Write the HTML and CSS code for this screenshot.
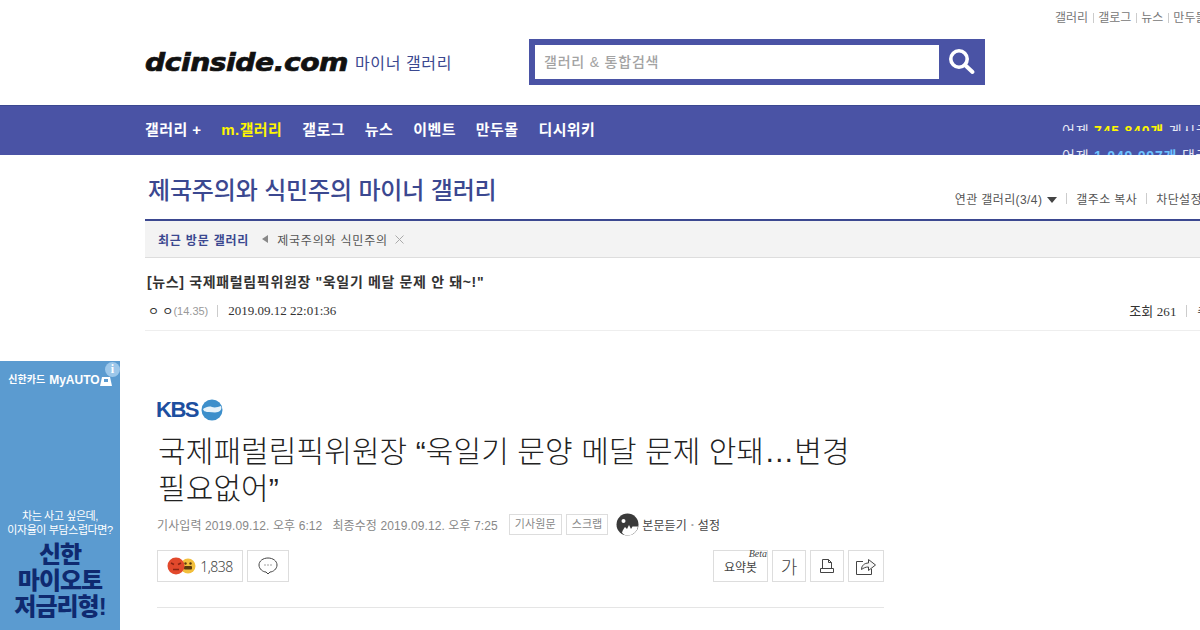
FILE: index.html
```html
<!DOCTYPE html>
<html lang="ko">
<head>
  <meta charset="UTF-8">
  <title>[뉴스] 국제패럴림픽위원장 "욱일기 메달 문제 안 돼~!" - 제국주의와 식민주의 마이너 갤러리</title>
  <link rel="stylesheet" href="styles.css">
</head>
<body>

  <!-- Top links -->
  <div class="util">
    <a href="#">갤러리</a><i></i><a href="#">갤로그</a><i></i><a href="#">뉴스</a><i></i><a href="#">만두몰</a>
  </div>

  <!-- Logo and search -->
  <header class="head">
    <div class="brand">
      <span class="logo">dcinside.com</span>
      <span class="logo-sub">마이너 갤러리</span>
    </div>
    <form class="search">
      <div class="search-input">갤러리 &amp; 통합검색</div>
      <div class="search-btn">
        <svg width="28" height="28" viewBox="0 0 28 28"><circle cx="11" cy="11" r="8.200" fill="none" stroke="#fff" stroke-width="3.600"/><path d="M17 17L24.500 24" stroke="#fff" stroke-width="4" stroke-linecap="round"/></svg>
      </div>
    </form>
  </header>

  <!-- Main navigation -->
  <nav class="gnb">
    <a href="#">갤러리 +</a>
    <a href="#" class="on">m.갤러리</a>
    <a href="#">갤로그</a>
    <a href="#">뉴스</a>
    <a href="#">이벤트</a>
    <a href="#">만두몰</a>
    <a href="#">디시위키</a>
    <div class="stats">
      <div class="stat-row">어제 <b class="yellow">745,840개</b> 게시글 등록</div>
      <div class="stat-row">어제 <b class="blue">1,049,097개</b> 댓글 등록</div>
    </div>
  </nav>

  <div class="content">
    <!-- Gallery title -->
    <div class="gall-head">
      <h2>제국주의와 식민주의 마이너 갤러리</h2>
      <div class="gall-opts">
        <span>연관 갤러리(3/4)<em class="caret"></em></span><i></i><span>갤주소 복사</span><i></i><span>차단설정</span>
      </div>
    </div>

    <div class="visited">
      <strong>최근 방문 갤러리</strong>
      <em class="arrow"></em>
      <span>제국주의와 식민주의</span>
      <svg width="9" height="9" viewBox="0 0 9 9"><path d="M.5.5l8 8M8.500.5l-8 8" stroke="#aaa" fill="none"/></svg>
    </div>

    <!-- Post head -->
    <h3 class="post-title">[뉴스] 국제패럴림픽위원장 "욱일기 메달 문제 안 돼~!"</h3>
    <div class="post-info">
      <span class="nick">ㅇ ㅇ</span><span class="ip">(14.35)</span><i></i><span class="date">2019.09.12 22:01:36</span>
      <span class="views">조회 261</span><i></i><span class="date">추천 5</span>
    </div>
  </div>

  <!-- Article -->
  <article class="article">
    <div class="press">
      <span class="press-name">KBS</span>
      <svg width="22" height="22" viewBox="0 0 22 22"><circle cx="11" cy="11" r="10.500" fill="#3d8fcb"/><path d="M2 10c3-2 6-3 9-2s6 0 9-1c1 2 0 5-3 6s-6 0-9 0-5 0-6-3z" fill="#e6f2fa"/></svg>
    </div>
    <h1 class="headline">국제패럴림픽위원장 “욱일기 문양 메달 문제 안돼…변경 필요없어”</h1>
    <div class="meta">
      <span>기사입력 2019.09.12. 오후 6:12</span>
      <span class="meta-mod">최종수정 2019.09.12. 오후 7:25</span>
      <a class="tag first" href="#">기사원문</a>
      <a class="tag" href="#">스크랩</a>
      <svg class="ear" width="23" height="23" viewBox="0 0 23 23"><circle cx="11.500" cy="11.500" r="11" fill="#3a3a3a"/><path d="M9 14l2 2 2-4 2 4 1.500-2.500H22a10.500 10.500 0 0 1-10 9c-3 0-5-1-6-3 1-3 2-4 3-5.500z" fill="#fff"/><circle cx="7.500" cy="8" r="2" fill="#fff"/></svg>
      <span class="listen">본문듣기</span>
      <span class="dot">•</span>
      <span class="listen">설정</span>
    </div>
    <div class="tools">
      <div class="reaction">
        <svg width="30" height="18" viewBox="0 0 30 18"><circle cx="21" cy="9" r="7.500" fill="#f2bf3c"/><rect x="17" y="9" width="8" height="3.500" rx="1" fill="#5a3a10"/><circle cx="18.500" cy="6.500" r="1.200" fill="#5a3a10"/><circle cx="23.500" cy="6.500" r="1.200" fill="#5a3a10"/><circle cx="9" cy="9" r="8.500" fill="#e2492c"/><path d="M4 6l3 1.500M14 6l-3 1.500M6 12.500h6" stroke="#8c2412" stroke-width="1.500" fill="none"/></svg>
        <span>1,838</span>
      </div>
      <div class="tool comment">
        <svg width="20" height="18" viewBox="0 0 20 18"><path d="M10 1c5 0 9 3 9 7s-4 7-7 7l-2 2-2-2c-3 0-7-3-7-7s4-7 9-7z" fill="none" stroke="#444"/><path d="M6.500 8h1M9.500 8h1M12.500 8h1" stroke="#444"/></svg>
      </div>
      <div class="tool summary">요약봇<em>Beta</em></div>
      <div class="tool font">가</div>
      <div class="tool print">
        <svg width="16" height="16" viewBox="0 0 16 16"><path d="M3.500 10.500V1.500h6l3 3v6M1.500 10.500h13v4h-13zM12.500 4.500h-3v-3" fill="none" stroke="#444"/></svg>
      </div>
      <div class="tool share">
        <svg width="22" height="19" viewBox="0 0 22 19"><path d="M8 4.500H1.500v13h15V12" fill="none" stroke="#444"/><path d="M6.500 12.500c0-4 3-6.500 7-6.500V2.500l7 5.500-7 5.500V10c-3 0-5 1-7 2.500z" fill="#f6f6f6" stroke="#444"/></svg>
      </div>
    </div>
    <hr class="rule">
  </article>

  <!-- Side banner -->
  <aside class="ad">
    <div class="ad-info">i</div>
    <div class="ad-brand">
      <span class="ad-card">신한카드</span>
      <span>MyAUTO</span>
      <svg width="12" height="12" viewBox="0 0 12 12"><path d="M0 12l2-9h8l2 9z" fill="#fff"/><rect x="4" y="5" width="4" height="3" fill="#5b9bd0"/></svg>
    </div>
    <p class="ad-copy">차는 사고 싶은데,<br>이자율이 부담스럽다면?</p>
    <p class="ad-big">신한<br>마이오토<br>저금리형!</p>
  </aside>

</body>
</html>
```

FILE: styles.css
```css
/* Basic styling */
html, body {
  height: 630px;
  overflow: hidden;
}

body {
  margin: 0;
  width: 1200px;
  position: relative;
  background-color: #fff;
  color: #333;
  font-family: "Liberation Sans", "Noto Sans CJK KR", sans-serif;
}

a {
  color: inherit;
  text-decoration: none;
}

/* Top links */
.util {
  height: 39px;
  box-sizing: border-box;
  padding: 10px 0 0 1055px;
  display: flex;
  align-items: flex-start;
  width: 1300px;
  font-size: 12px;
  line-height: 16px;
  color: #777;
  white-space: nowrap;
}

.util i {
  width: 1px;
  height: 10px;
  margin: 3px 4.500px 0;
  background-color: #ccc;
}

/* Logo and search */
.head {
  display: flex;
  height: 66px;
  padding-left: 145px;
}

.brand {
  width: 384px;
  height: 46px;
  display: flex;
  align-items: center;
}

.logo {
  width: 202px;
  padding-top: 1px;
  font-family: "DejaVu Sans", sans-serif;
  font-size: 24px;
  font-weight: 700;
  font-style: italic;
  letter-spacing: -0.400px;
  color: #111;
  white-space: nowrap;
  transform: scaleX(1.175);
  transform-origin: left center;
  -webkit-text-stroke: 0.7px #111;
}

.logo-sub {
  margin-left: 8px;
  font-size: 16px;
  letter-spacing: 0.600px;
  color: #3b4890;
}

.search {
  margin: 0;
  width: 456px;
  height: 46px;
  box-sizing: border-box;
  padding: 6px 0 6px 6px;
  display: flex;
  background-color: #4a53a5;
}

.search-input {
  width: 404px;
  padding-left: 9px;
  box-sizing: border-box;
  background-color: #fff;
  font-size: 14px;
  font-weight: 500;
  letter-spacing: 0.800px;
  line-height: 34px;
  color: #a3a3a3;
}

.search-btn {
  flex: 1;
  display: flex;
  align-items: center;
  justify-content: center;
}

/* Main navigation */
.gnb {
  height: 50px;
  box-sizing: border-box;
  border-top: 1px solid #3b4890;
  padding: 0 0 4px 145px;
  display: flex;
  align-items: center;
  gap: 20px;
  overflow: hidden;
  background-color: #4a53a5;
  font-size: 15px;
  font-weight: 700;
  letter-spacing: 0.400px;
  color: #fff;
  white-space: nowrap;
}

.gnb .on {
  color: #fff600;
}

.stats {
  position: absolute;
  left: 1062px;
  top: 124px;
  display: flex;
  flex-direction: column;
  gap: 18px;
  height: 31px;
  overflow: hidden;
  font-size: 14px;
  font-weight: 400;
  letter-spacing: 0.800px;
  color: #e6e8f5;
}

.stat-row {
  height: 9px;
  line-height: 14px;
  overflow: hidden;
}

.stat-row .yellow { color: #fff600; }
.stat-row .blue { color: #6fc3ff; }

/* Gallery head */
.content {
  margin-left: 145px;
  width: 1100px;
}

.gall-head {
  height: 64px;
  padding-left: 3px;
  display: flex;
  justify-content: space-between;
  box-sizing: border-box;
}

.gall-head h2 {
  margin: 21px 0 0;
  font-size: 24px;
  line-height: 30px;
  font-weight: 500;
  letter-spacing: -0.150px;
  color: #3b4890;
}

.gall-opts {
  margin-top: 35px;
  height: 16px;
  display: flex;
  align-items: center;
  font-size: 12px;
  letter-spacing: 0.400px;
  color: #555;
  padding-right: 43px;
  white-space: nowrap;
}

.gall-opts i {
  width: 1px;
  height: 11px;
  margin: 0 9px;
  background-color: #ccc;
}

.caret {
  display: inline-block;
  margin-left: 5px;
  vertical-align: 1px;
  border-top: 6px solid #444;
  border-left: 5px solid transparent;
  border-right: 5px solid transparent;
}

.visited {
  height: 39px;
  box-sizing: border-box;
  border-top: 2px solid #3b4890;
  border-bottom: 1px solid #ddd;
  padding-left: 13px;
  display: flex;
  align-items: center;
  background-color: #f3f3f3;
  font-size: 12px;
  letter-spacing: 0.800px;
  color: #555;
}

.visited strong {
  color: #3b4890;
}

.arrow {
  margin: 0 9px 0 13px;
  border-right: 6px solid #888;
  border-top: 4px solid transparent;
  border-bottom: 4px solid transparent;
}

.visited svg {
  margin-left: 7px;
}

/* Post head */
.post-title {
  margin: 14px 0 0 2px;
  font-size: 14px;
  line-height: 20px;
  font-weight: 700;
  letter-spacing: 0.650px;
  color: #333;
}

.post-info {
  margin-top: 9px;
  height: 30px;
  box-sizing: border-box;
  padding: 0 0 10px 3px;
  display: flex;
  align-items: center;
  border-bottom: 1px solid #eee;
  font-size: 13px;
  white-space: nowrap;
}

.post-info i {
  width: 1px;
  height: 12px;
  margin: 0 10px 0 9px;
  background-color: #ccc;
}

.nick {
  font-size: 12px;
}

.ip {
  font-size: 11px;
  color: #999;
}

.date {
  font-family: "Liberation Serif", serif;
  color: #333;
}

.views {
  margin-left: 793px;
  letter-spacing: 0.100px;
  font-family: "Liberation Serif", "Noto Sans CJK KR", serif;
}

/* Article */
.article {
  margin: 69px 0 0 157px;
  width: 727px;
}

.press {
  height: 20px;
  display: flex;
  align-items: center;
  gap: 3px;
  margin-left: -1px;
}

.press-name {
  font-size: 22px;
  font-weight: 700;
  letter-spacing: -1.500px;
  color: #1d4f9f;
}

.headline {
  margin: 13px 0 0 1px;
  font-size: 30px;
  line-height: 37px;
  font-weight: 300;
  letter-spacing: 0.100px;
  color: #222;
}

.meta {
  margin-top: 4px;
  height: 26px;
  display: flex;
  align-items: center;
  font-size: 12px;
  letter-spacing: 0.100px;
  color: #888;
  white-space: nowrap;
}

.meta-mod {
  margin-left: 10px;
}

.tag {
  height: 21px;
  box-sizing: border-box;
  padding: 0 5px;
  border: 1px solid #ddd;
  font-size: 11px;
  line-height: 19px;
  margin-left: 4px;
}

.tag.first {
  margin-left: 11px;
}

.ear {
  margin: 0 3px 0 8px;
}

.listen {
  font-size: 12px;
  color: #444;
}

.dot {
  margin: 0 4px;
  font-size: 8px;
  color: #aaa;
}

/* Tool buttons */
.tools {
  margin-top: 13px;
  height: 32px;
  display: flex;
  gap: 4px;
}

.reaction,
.tool {
  box-sizing: border-box;
  height: 32px;
  border: 1px solid #ddd;
  display: flex;
  align-items: center;
  justify-content: center;
  color: #444;
}

.reaction {
  width: 86px;
  gap: 3px;
  font-family: "Noto Sans", sans-serif;
  font-size: 14px;
  font-weight: 300;
  letter-spacing: -0.500px;
}

.comment {
  width: 42px;
}

.summary {
  width: 55px;
  margin-left: 420px;
  padding-top: 1px;
  font-size: 12px;
  position: relative;
}

.summary em {
  position: absolute;
  right: 0;
  top: -3px;
  font-family: "Liberation Serif", serif;
  font-size: 10px;
}

.font {
  width: 34px;
  font-size: 18px;
  font-weight: 300;
}

.print {
  width: 34px;
}

.share {
  width: 36px;
}

.rule {
  margin: 25px 0 0;
  border: 0;
  border-top: 1px solid #e5e5e5;
}

/* Side banner */
.ad {
  position: absolute;
  left: 0;
  top: 361px;
  width: 120px;
  height: 269px;
  box-sizing: border-box;
  padding-top: 11px;
  overflow: hidden;
  background-color: #5b9bd0;
  text-align: center;
  white-space: nowrap;
}

.ad-info {
  position: absolute;
  right: 0;
  top: 1px;
  width: 15px;
  height: 15px;
  border-radius: 50%;
  background-color: #9cc7ea;
  color: #fff;
  font-family: "Liberation Serif", serif;
  font-size: 12px;
  font-weight: 700;
  line-height: 15px;
}

.ad-brand {
  display: flex;
  align-items: center;
  justify-content: center;
  gap: 4px;
  font-size: 12px;
  line-height: 16px;
  font-weight: 700;
  color: #fff;
}

.ad-card {
  font-size: 10px;
}

.ad-brand svg {
  margin-left: -4px;
}

.ad-copy {
  margin: 121px 0 0;
  font-size: 11px;
  line-height: 14px;
  letter-spacing: -0.400px;
  color: #fff;
}

.ad-big {
  margin: 5px 0 0;
  font-size: 24px;
  line-height: 26px;
  font-weight: 900;
  letter-spacing: -1px;
  color: #0f2a70;
}
```
